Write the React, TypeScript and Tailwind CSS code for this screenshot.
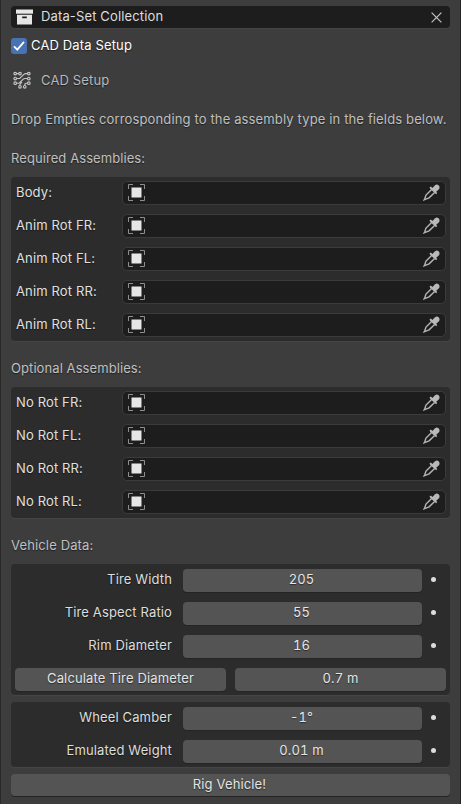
import React from "react";

const labelShadow = "[text-shadow:0_1px_1px_rgba(0,0,0,0.5)]";

function ArchiveIcon() {
  return (
    <svg width="17" height="16" viewBox="0 0 17 16" fill="#e6e6e6">
      <path d="M0 0.500h17v4.200H0z" />
      <path fillRule="evenodd" d="M1 5.800h15V15.500H1zM6.200 7.500v1.800h4.600V7.500z" />
    </svg>
  );
}

function CircuitIcon() {
  return (
    <svg width="18" height="18" viewBox="0 0 18 18" fill="none" stroke="#c4c4c4" strokeWidth="1.150">
      <circle cx="2.200" cy="2.600" r="1.300" />
      <circle cx="7" cy="2.600" r="1.300" />
      <circle cx="15.800" cy="2.600" r="1.300" />
      <circle cx="2.200" cy="7.500" r="1.300" />
      <circle cx="2.200" cy="12.200" r="1.300" />
      <circle cx="15.800" cy="7.500" r="1.300" />
      <circle cx="15.800" cy="12.200" r="1.300" />
      <circle cx="7" cy="15.800" r="1.300" />
      <circle cx="11.700" cy="15.800" r="1.300" />
      <path d="M3.500 2.600h2.200M3.500 7.500h3.200l4.200-4.100q.8-.8 1.900-.8h1.700M3.500 12.200h1.800q.9 0 1.500-.7l3.200-3.200q.8-.8 1.900-.8h2.600M7 14.500v-1.400l2-2M11.700 14.500q0-2.300 1.300-2.300h1.500" />
    </svg>
  );
}

function ObjectIcon() {
  return (
    <svg width="17" height="17" viewBox="0 0 17 17">
      <path d="M.5 5V.5H5M12 .5h4.500V5M16.500 12v4.500H12M5 16.500H.5V12" fill="none" stroke="#8e8e8e" />
      <rect x="3.500" y="3.500" width="10" height="10" fill="#e6e6e6" />
    </svg>
  );
}

function EyedropperIcon() {
  return (
    <svg width="17" height="17" viewBox="0 0 17 17">
      <path d="M8.600 5.500 3 11.100 1.900 14.200 1.200 15.800 2.800 15.100 6.100 13.800 11.600 8.400" fill="none" stroke="#b5b5b5" strokeWidth="1.400" />
      <path d="M6.500 3.400 7.900 2.600 9.400 3.900 12 1.200Q13.800 0 15.600 1.200 17.100 2.700 16.200 4.900L13.200 7.700 14.200 9 13.200 10.300 11.700 9.100 7.300 5z" fill="#b9b9b9" />
    </svg>
  );
}

function Heading({ children, className }: { children: React.ReactNode; className: string }) {
  return <div className={`h-5 pl-[11px] leading-5 text-[#c0c0c0] ${labelShadow} ${className}`}>{children}</div>;
}

function Box({ children, className }: { children: React.ReactNode; className: string }) {
  return (
    <div className={`mx-[11px] flex flex-col gap-[9px] rounded-[4px] bg-[#2c2c2c] px-1 py-1 shadow-[0_1px_0_#454545] ${className}`}>
      {children}
    </div>
  );
}

function ObjectField({ label }: { label: string }) {
  return (
    <div className="flex h-6 items-center">
      <div className={`w-[107px] pb-[2px] pl-[1px] text-[#e0e0e0] ${labelShadow}`}>{label}</div>
      <div className="flex h-6 flex-1 items-center justify-between rounded-[5px] border border-[#3b3b3b] bg-[#1d1d1d] pr-[5px] pb-px pl-[5px]">
        <ObjectIcon />
        <EyedropperIcon />
      </div>
    </div>
  );
}

const button = `flex items-center justify-center rounded-[4px] bg-[#545454] pb-[2px] text-[#e5e5e5] shadow-[0_1px_0_#242424] ${labelShadow}`;
const numeric = "tabular-nums";

function NumberField({ label, value }: { label: string; value: string }) {
  return (
    <div className="flex h-6 items-center">
      <div className={`w-[157px] pb-[2px] text-right text-[#dedede] ${labelShadow}`}>{label}</div>
      <div className={`${button} ${numeric} ml-[11px] h-[23px] w-[239px] pr-[2px]`}>{value}</div>
      <div className="mb-px ml-[9px] size-[5px] rounded-full bg-[#dddddd]" />
    </div>
  );
}

export default function App() {
  return (
    <main className="flex h-[804px] w-[461px] flex-col overflow-hidden border-r border-l border-r-[#242424] border-l-[#292929] bg-[#3d3d3d] font-['Inter',sans-serif] text-[13px] leading-5 tracking-[0.14px] whitespace-nowrap">
      <div className="-mx-px flex flex-col">
        <div className="mx-[11px] mt-1.5 flex h-[22px] items-center rounded-[4px] bg-[#1d1d1d] pl-[5px] shadow-[0_1px_0_#454545]">
          <ArchiveIcon />
          <span className="ml-2 flex-1 pb-[2px] text-[#dedede]">Data-Set Collection</span>
          <svg className="mr-2" width="11" height="11" viewBox="0 0 11 11" stroke="#c4c4c4" strokeWidth="1.200">
            <path d="M.6.6l9.800 9.800M10.400.6.6 10.400" />
          </svg>
        </div>
        <div className="mt-2 ml-[11px] flex h-5 items-center gap-1">
          <span className="flex size-4 items-center justify-center rounded-[3px] bg-[#4772b3]">
            <svg width="12" height="12" viewBox="0 0 12 12" fill="none" stroke="#ffffff" strokeWidth="1.800">
              <path d="M1 6.300 4.300 9.600 11 1.800" />
            </svg>
          </span>
          <span className={`pb-[2px] text-[#ffffff] ${labelShadow}`}>CAD Data Setup</span>
        </div>
        <div className="mt-[14px] ml-[13px] flex h-5 items-center gap-[10px]">
          <CircuitIcon />
          <span className={`text-[#b9b9b9] ${labelShadow}`}>CAD Setup</span>
        </div>
        <Heading className="mt-[19px]">Drop Empties corrosponding to the assembly type in the fields below.</Heading>
        <Heading className="mt-[19px] tracking-[0.08px]">Required Assemblies:</Heading>
        <Box className="mt-[9px]">
          <ObjectField label="Body:" />
          <ObjectField label="Anim Rot FR:" />
          <ObjectField label="Anim Rot FL:" />
          <ObjectField label="Anim Rot RR:" />
          <ObjectField label="Anim Rot RL:" />
        </Box>
        <Heading className="mt-[17px] tracking-[0.08px]">Optional Assemblies:</Heading>
        <Box className="mt-[9px]">
          <ObjectField label="No Rot FR:" />
          <ObjectField label="No Rot FL:" />
          <ObjectField label="No Rot RR:" />
          <ObjectField label="No Rot RL:" />
        </Box>
        <Heading className="mt-[17px]">Vehicle Data:</Heading>
        <Box className="mt-[9px]">
          <NumberField label="Tire Width" value="205" />
          <NumberField label="Tire Aspect Ratio" value="55" />
          <NumberField label="Rim Diameter" value="16" />
          <div className="grid h-6 grid-cols-2 items-center gap-[9px]">
            <div className={`${button} h-[23px]`}>Calculate Tire Diameter</div>
            <div className={`${button} ${numeric} h-[23px]`}>0.7 m</div>
          </div>
        </Box>
        <Box className="mt-[7px]">
          <NumberField label="Wheel Camber" value="-1°" />
          <NumberField label="Emulated Weight" value="0.01 m" />
        </Box>
        <div className={`${button} mx-[11px] mt-[7px] h-[22px] pr-[2px]`}>Rig Vehicle!</div>
      </div>
    </main>
  );
}
